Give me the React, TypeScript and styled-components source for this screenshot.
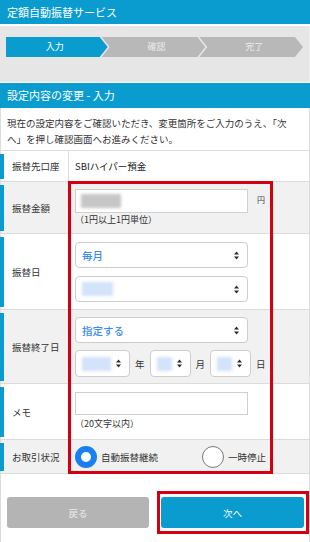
import React from "react";
import styled, { createGlobalStyle } from "styled-components";

const BLUE = "#0a9ccf";
const GRAYROW = "#f1f1f1";
const LINE = "#dcdcdc";

const GlobalStyle = createGlobalStyle`
  html, body { margin: 0; padding: 0; background: #fff; }
  body { font-family: "Noto Sans CJK JP", "Noto Sans", sans-serif; color: #333; }
  * { box-sizing: border-box; }
`;

const Screen = styled.div`
  width: 310px;
  height: 542px;
  overflow: hidden;
  background: #fff;
  display: flex;
  flex-direction: column;
`;

const TitleBar = styled.h1`
  margin: 0;
  flex: none;
  height: 24px;
  background: ${BLUE};
  color: #fff;
  font-size: 11px;
  font-weight: normal;
  line-height: 24px;
  padding-left: 7px;
`;

const StepsArea = styled.div`
  flex: none;
  margin-top: 2px;
  height: 56px;
  background: #e6e6e6;
  border-right: 1px solid #efefef;
  padding: 11px 6px 0 6px;
`;

const Steps = styled.ol`
  display: flex;
  margin: 0;
  padding: 0;
  list-style: none;
  height: 20px;
`;

const Step = styled.li<{ $active?: boolean; $first?: boolean }>`
  flex: 1;
  margin-left: ${(p) => (p.$first ? 0 : -6)}px;
  padding-left: ${(p) => (p.$first ? 0 : 6)}px;
  padding-right: ${(p) => (p.$first ? 4 : 0)}px;
  background: ${(p) => (p.$active ? BLUE : "#b8b8b8")};
  color: ${(p) => (p.$active ? "#fff" : "#ececec")};
  font-size: 9px;
  line-height: 20px;
  text-align: center;
  clip-path: ${(p) =>
    p.$first
      ? "polygon(0 0, calc(100% - 8px) 0, 100% 50%, calc(100% - 8px) 100%, 0 100%)"
      : "polygon(0 0, calc(100% - 8px) 0, 100% 50%, calc(100% - 8px) 100%, 0 100%, 8px 50%)"};
`;

const SectionBar = styled.h2`
  margin: 1px 0 0;
  flex: none;
  height: 25px;
  background: ${BLUE};
  color: #fff;
  font-size: 11px;
  font-weight: normal;
  line-height: 25px;
  padding-left: 7px;
`;

const Body = styled.div`
  flex: 1;
  border-left: 1px solid ${LINE};
  border-right: 1px solid ${LINE};
  display: flex;
  flex-direction: column;
`;

const Lead = styled.p`
  margin: 0;
  height: 43px;
  padding: 7px 6px 0 6px;
  font-size: 9.5px;
  line-height: 16px;
  color: #333;
  border-bottom: 1px solid ${LINE};
`;

const FormTable = styled.div`
  position: relative;
  display: flex;
  flex-direction: column;
`;

const Row = styled.div<{ $h: number; $gray?: boolean }>`
  display: grid;
  grid-template-columns: 68px 1fr;
  height: ${(p) => p.$h}px;
  background: ${(p) => (p.$gray ? GRAYROW : "#fff")};
  border-bottom: 1px solid ${LINE};
`;

const Label = styled.div`
  position: relative;
  display: flex;
  align-items: center;
  padding-left: 11px;
  font-size: 9.5px;
  color: #333;
  border-right: 1px solid ${LINE};
  &::before {
    content: "";
    position: absolute;
    left: -1px;
    top: 3px;
    bottom: 2px;
    width: 4px;
    background: ${BLUE};
  }
`;

const Value = styled.div<{ $pt?: number; $center?: boolean }>`
  display: flex;
  flex-direction: column;
  justify-content: ${(p) => (p.$center ? "center" : "flex-start")};
  padding: ${(p) => p.$pt ?? 0}px 0 0 6px;
  font-size: 9.5px;
  color: #222;
`;

const InlineLine = styled.div<{ $gap: number }>`
  display: flex;
  align-items: center;
  gap: ${(p) => p.$gap}px;
`;

const TextBox = styled.div<{ $h: number }>`
  width: 173px;
  height: ${(p) => p.$h}px;
  background: #fff;
  border: 1px solid #cfcfcf;
  display: flex;
  align-items: center;
  padding-left: 5px;
`;

const Unit = styled.span`
  font-size: 8px;
  color: #444;
  margin-top: -4px;
`;

const Note = styled.div<{ $lh: number }>`
  font-size: 9px;
  line-height: ${(p) => p.$lh}px;
  color: #333;
`;

const SelectBox = styled.div<{ $w: number; $h: number }>`
  width: ${(p) => p.$w}px;
  height: ${(p) => p.$h}px;
  background: #fff;
  border: 1px solid #cdcdcd;
  border-radius: 4px;
  display: flex;
  align-items: center;
  justify-content: space-between;
  padding: 0 8px 0 6px;
  color: #3a8cf2;
  font-size: 10.5px;
  font-weight: 500;
`;

const Stack = styled.div<{ $gap: number }>`
  display: flex;
  flex-direction: column;
  gap: ${(p) => p.$gap}px;
`;

const Blur = styled.span<{ $w: number; $tone: "blue" | "gray" }>`
  display: block;
  width: ${(p) => p.$w}px;
  height: 14px;
  background: ${(p) => (p.$tone === "blue" ? "#d3e3fa" : "#c6c6c6")};
  filter: blur(1.5px);
`;

const DateUnit = styled.span`
  font-size: 9.5px;
  color: #333;
`;

const RadioGroup = styled.div`
  display: flex;
  align-items: center;
  gap: 44px;
`;

const RadioOption = styled.label`
  display: flex;
  align-items: center;
  gap: 4px;
  font-size: 9.5px;
  color: #333;
`;

const RadioDot = styled.span<{ $on?: boolean }>`
  width: 22px;
  height: 22px;
  border-radius: 50%;
  background: #fff;
  border: ${(p) => (p.$on ? "6px solid #1a7ff2" : "1px solid #7a7a7a")};
`;

const Highlight = styled.div`
  position: absolute;
  border: 3px solid #d40010;
  pointer-events: none;
`;

const FormHighlight = styled(Highlight)`
  left: 67px;
  top: 30px;
  width: 205px;
  height: 293px;
`;

const Actions = styled.div`
  display: grid;
  grid-template-columns: 142px 143px;
  column-gap: 12px;
  padding: 23px 0 0 6px;
`;

const Button = styled.button<{ $primary?: boolean }>`
  height: 31px;
  border: none;
  border-radius: 3px;
  background: ${(p) => (p.$primary ? BLUE : "#b4b4b4")};
  color: ${(p) => (p.$primary ? "#fff" : "#ededed")};
  font-family: inherit;
  font-size: 9.5px;
  padding: 0;
`;

const NextWrap = styled.div`
  position: relative;
  display: flex;
  flex-direction: column;
`;

const NextHighlight = styled(Highlight)`
  left: -4px;
  right: -5px;
  top: -6px;
  bottom: -6px;
`;

const Arrows = () => (
  <svg width="5" height="9" viewBox="0 0 5 9" aria-hidden>
    <path d="M0 3.6 L2.5 0.4 L5 3.6 Z M0 5.4 L2.5 8.6 L5 5.4 Z" fill="#2b2b2b" />
  </svg>
);

const Select = ({
  w,
  h,
  children,
}: {
  w: number;
  h: number;
  children: React.ReactNode;
}) => (
  <SelectBox $w={w} $h={h}>
    <span>{children}</span>
    <Arrows />
  </SelectBox>
);

export default function App() {
  return (
    <>
      <GlobalStyle />
      <Screen>
        <TitleBar>定額自動振替サービス</TitleBar>
        <StepsArea>
          <Steps>
            <Step $active $first>
              入力
            </Step>
            <Step>確認</Step>
            <Step>完了</Step>
          </Steps>
        </StepsArea>
        <SectionBar>設定内容の変更 - 入力</SectionBar>
        <Body>
          <Lead>
            現在の設定内容をご確認いただき、変更箇所をご入力のうえ、「次
            <br />
            へ」を押し確認画面へお進みください。
          </Lead>
          <FormTable>
            <Row $h={31}>
              <Label>振替先口座</Label>
              <Value $center>SBIハイパー預金</Value>
            </Row>
            <Row $h={52} $gray>
              <Label>振替金額</Label>
              <Value $pt={7}>
                <InlineLine $gap={9}>
                  <TextBox $h={24}>
                    <Blur $w={40} $tone="gray" />
                  </TextBox>
                  <Unit>円</Unit>
                </InlineLine>
                <Note $lh={13}>（1円以上1円単位）</Note>
              </Value>
            </Row>
            <Row $h={76}>
              <Label>振替日</Label>
              <Value $pt={8}>
                <Stack $gap={8}>
                  <Select w={173} h={26}>
                    毎月
                  </Select>
                  <Select w={173} h={26}>
                    <Blur $w={31} $tone="blue" />
                  </Select>
                </Stack>
              </Value>
            </Row>
            <Row $h={74} $gray>
              <Label>振替終了日</Label>
              <Value $pt={7}>
                <Stack $gap={7}>
                  <Select w={173} h={26}>
                    指定する
                  </Select>
                  <InlineLine $gap={5}>
                    <Select w={55} h={27}>
                      <Blur $w={29} $tone="blue" />
                    </Select>
                    <DateUnit>年</DateUnit>
                    <Select w={41} h={27}>
                      <Blur $w={15} $tone="blue" />
                    </Select>
                    <DateUnit>月</DateUnit>
                    <Select w={41} h={27}>
                      <Blur $w={15} $tone="blue" />
                    </Select>
                    <DateUnit>日</DateUnit>
                  </InlineLine>
                </Stack>
              </Value>
            </Row>
            <Row $h={56}>
              <Label>メモ</Label>
              <Value $pt={8}>
                <TextBox $h={23} />
                <Note $lh={17}>（20文字以内）</Note>
              </Value>
            </Row>
            <Row $h={34} $gray>
              <Label>お取引状況</Label>
              <Value $center>
                <RadioGroup>
                  <RadioOption>
                    <RadioDot $on />
                    自動振替継続
                  </RadioOption>
                  <RadioOption>
                    <RadioDot />
                    一時停止
                  </RadioOption>
                </RadioGroup>
              </Value>
            </Row>
            <FormHighlight />
          </FormTable>
          <Actions>
            <Button>戻る</Button>
            <NextWrap>
              <Button $primary>次へ</Button>
              <NextHighlight />
            </NextWrap>
          </Actions>
        </Body>
      </Screen>
    </>
  );
}
